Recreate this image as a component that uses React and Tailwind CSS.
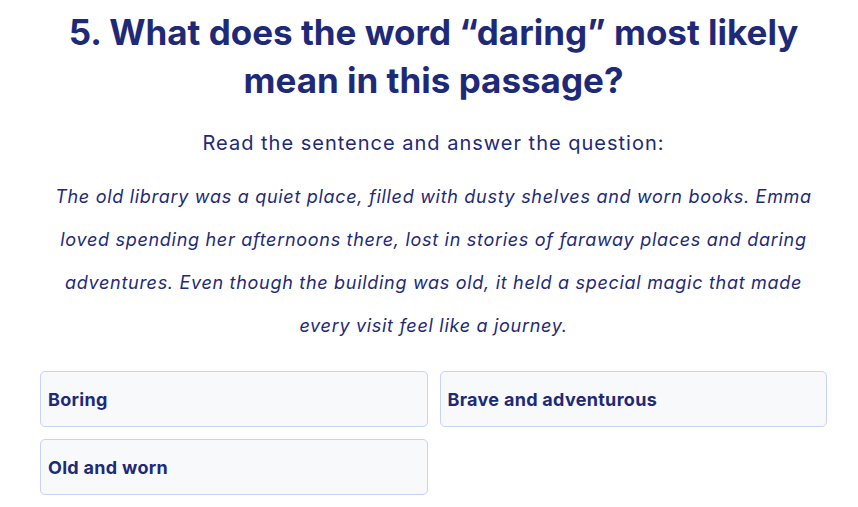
import React from 'react';

const options = ['Boring', 'Brave and adventurous', 'Old and worn'];

export default function App() {
    return (
        <div className="min-h-screen bg-white font-['Inter','Noto_Sans',sans-serif] text-[#1e2a78]">
            <div className="ml-[40px] w-[787px] pt-[8px] flex flex-col items-center">
                <h1 className="text-center text-[35px] leading-[48px] font-bold">
                    5. What does the word “daring” most likely mean in this passage?
                </h1>
                <p className="mt-[25px] text-[20px] leading-[28px] tracking-[1px]">
                    Read the sentence and answer the question:
                </p>
                <p className="mt-[18px] text-center italic text-[18px] leading-[43px] tracking-[0.7px]">
                    The old library was a quiet place, filled with dusty shelves and worn books. Emma loved spending her afternoons there, lost in stories of faraway places and daring adventures. Even though the building was old, it held a special magic that made every visit feel like a journey.
                </p>
                <div className="mt-[24px] w-full grid grid-cols-2 gap-x-[12px] gap-y-[12px]">
                    {options.map((opt) => (
                        <button
                            key={opt}
                            className="h-[56px] flex items-center px-[7px] text-left text-[18px] tracking-[0.3px] font-bold bg-[#f8f9fb] border border-[#c7d2fe] rounded-[5px]"
                        >
                            {opt}
                        </button>
                    ))}
                </div>
            </div>
        </div>
    );
}
